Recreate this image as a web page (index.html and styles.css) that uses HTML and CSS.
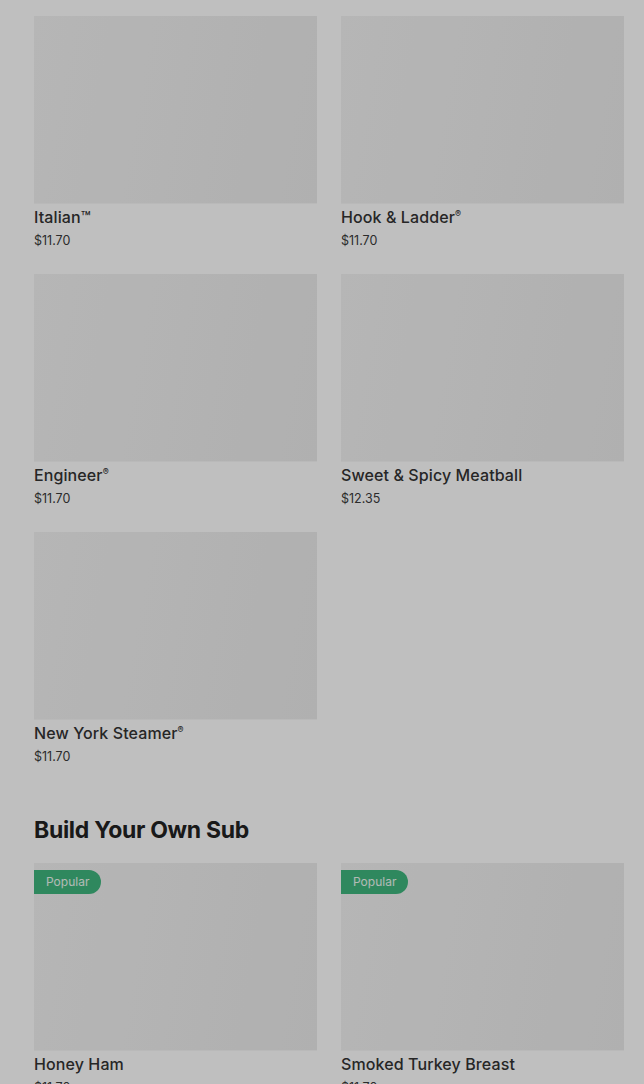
FILE: index.html
```html
<!DOCTYPE html>
<html lang="en">
<head>
<meta charset="utf-8">
<link rel="stylesheet" href="styles.css">
</head>
<body>
<main class="page">
  <section class="grid">
    <div class="card"><div class="img"></div><div class="name">Italian™</div><div class="price">$11.70</div></div>
    <div class="card"><div class="img"></div><div class="name">Hook &amp; Ladder<sup>®</sup></div><div class="price">$11.70</div></div>
    <div class="card"><div class="img"></div><div class="name">Engineer<sup>®</sup></div><div class="price">$11.70</div></div>
    <div class="card"><div class="img"></div><div class="name">Sweet &amp; Spicy Meatball</div><div class="price">$12.35</div></div>
    <div class="card"><div class="img"></div><div class="name">New York Steamer<sup>®</sup></div><div class="price">$11.70</div></div>
  </section>
  <h2 class="heading">Build Your Own Sub</h2>
  <section class="grid">
    <div class="card"><div class="img"><span class="badge">Popular</span></div><div class="name">Honey Ham</div><div class="price">$11.70</div></div>
    <div class="card"><div class="img"><span class="badge">Popular</span></div><div class="name">Smoked Turkey Breast</div><div class="price">$11.70</div></div>
  </section>
</main>
<div class="overlay"></div>
</body>
</html>
```
FILE: styles.css
```css
html, body {
  margin: 0;
  padding: 0;
  background: #ffffff;
  font-family: Inter, "Noto Sans", sans-serif;
  color: #333333;
}
.page {
  padding: 16px 20px 0 34px;
}
.grid {
  display: grid;
  grid-template-columns: 283px 283px;
  column-gap: 24px;
  row-gap: 25px;
}
.card {
  display: flex;
  flex-direction: column;
}
.img {
  position: relative;
  height: 187px;
  background: linear-gradient(100deg, #f3f3f3 0%, #efefef 50%, #ebebeb 100%);
  border-bottom: 1px solid #f7f7f7;
}
.name {
  margin-top: 3px;
  font-size: 16px;
  font-weight: 500;
  line-height: 20px;
  letter-spacing: 0.1px;
}
.name sup {
  font-size: 9px;
  vertical-align: 6px;
  line-height: 0;
}
.price {
  margin-top: 6px;
  font-size: 12.5px;
  line-height: 16px;
  color: #3a3a3a;
}
.heading {
  margin: 50px 0 18px;
  font-size: 23px;
  font-weight: 700;
  line-height: 30px;
  letter-spacing: -0.3px;
  color: #222222;
}
.badge {
  position: absolute;
  top: 7px;
  left: 0;
  height: 24px;
  line-height: 24px;
  padding: 0 12px 0 12px;
  background: #3fb67e;
  color: #eef8f2;
  font-size: 12px;
  border-radius: 0 12px 12px 0;
}
.overlay {
  position: fixed;
  inset: 0;
  background: rgba(0, 0, 0, 0.25);
}
```
